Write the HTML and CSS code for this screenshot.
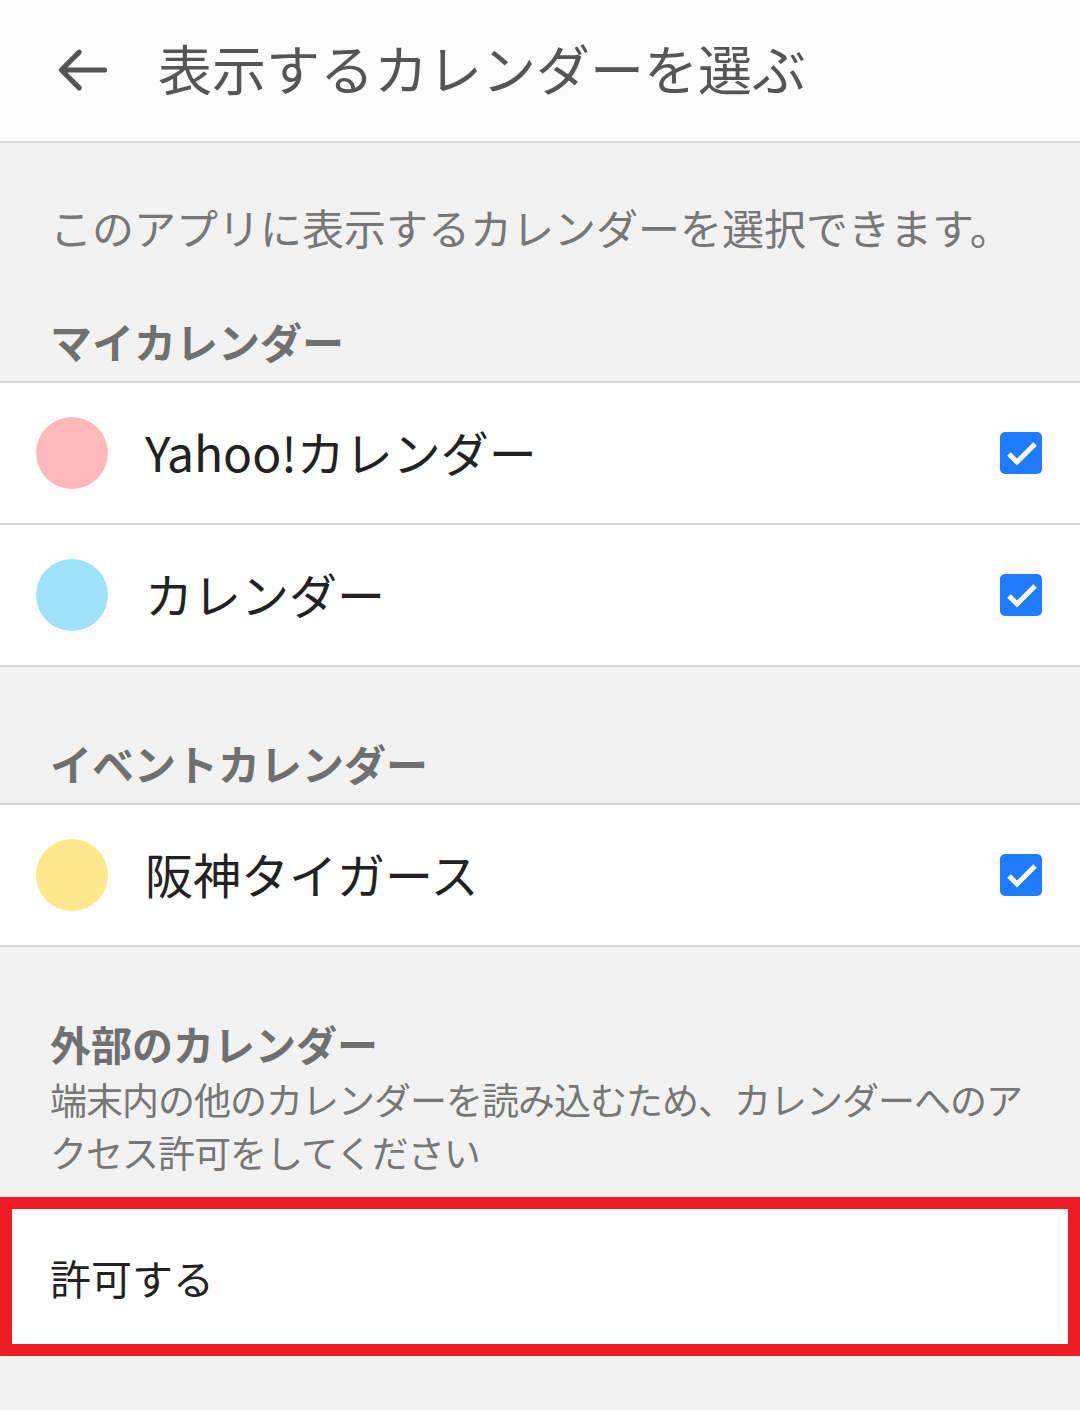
FILE: index.html
```html
<!DOCTYPE html>
<html lang="ja">
<head>
    <meta charset="UTF-8">
    <meta name="viewport" content="width=device-width, initial-scale=1.0">
    <title>表示するカレンダーを選ぶ</title>
    <link rel="stylesheet" href="styles.css">
</head>
<body>

<div class="header">
    <svg class="back" width="60" height="60" viewBox="50 42 64 60">
        <path d="M106 72 H61 M79 53 L60 72 L79 91" fill="none" stroke="#555" stroke-width="5.5" stroke-linecap="round" stroke-linejoin="round"/>
    </svg>
    <h1>表示するカレンダーを選ぶ</h1>
</div>

<div class="section intro">
    <p class="desc">このアプリに表示するカレンダーを選択できます。</p>
    <h2>マイカレンダー</h2>
</div>

<div class="row">
    <span class="dot pink"></span>
    <span class="name">Yahoo!カレンダー</span>
    <span class="check">
        <svg width="42" height="42" viewBox="0 0 42 42"><polyline points="9,22 17,30 35,12" fill="none" stroke="#fff" stroke-width="5"/></svg>
    </span>
</div>
<div class="row">
    <span class="dot blue"></span>
    <span class="name">カレンダー</span>
    <span class="check">
        <svg width="42" height="42" viewBox="0 0 42 42"><polyline points="9,22 17,30 35,12" fill="none" stroke="#fff" stroke-width="5"/></svg>
    </span>
</div>

<div class="section event">
    <h2>イベントカレンダー</h2>
</div>

<div class="row">
    <span class="dot yellow"></span>
    <span class="name">阪神タイガース</span>
    <span class="check">
        <svg width="42" height="42" viewBox="0 0 42 42"><polyline points="9,22 17,30 35,12" fill="none" stroke="#fff" stroke-width="5"/></svg>
    </span>
</div>

<div class="section external">
    <h2>外部のカレンダー</h2>
    <p class="note">端末内の他のカレンダーを読み込むため、カレンダーへのアクセス許可をしてください</p>
</div>

<div class="allow">許可する</div>

</body>
</html>
```

FILE: styles.css
```css
body {
    font-family: "Noto Sans CJK JP", "Noto Sans", sans-serif;
    background-color: #f2f2f2;
    margin: 0;
    height: 1410px;
    overflow: hidden;
}
.header {
    height: 141px;
    background-color: #fcfcfc;
    border-bottom: 2px solid #d8d8d8;
    display: flex;
    align-items: center;
    padding-left: 52px;
}
.header .back {
    margin-top: -2px;
}
.header h1 {
    margin: 0 0 0 46px;
    font-size: 54px;
    font-weight: 400;
    color: #555;
    line-height: 1;
    margin-top: -6px;
}
.section {
    padding: 0 50px 10px 50px;
}
.section h2 {
    margin: 0;
    font-size: 42px;
    font-weight: 700;
    color: #707070;
    line-height: 60px;
}
.intro {
    padding-top: 54px;
    border-bottom: 2px solid #d8d8d8;
}
.intro .desc {
    margin: 0 0 54px 0;
    font-size: 42px;
    color: #777;
    line-height: 60px;
}
.event {
    padding-top: 66px;
    border-bottom: 2px solid #d8d8d8;
}
.row {
    height: 140px;
    background-color: #fff;
    border-bottom: 2px solid #d8d8d8;
    display: flex;
    align-items: center;
    padding: 0 38px 0 36px;
}
.dot {
    width: 72px;
    height: 72px;
    border-radius: 50%;
    flex-shrink: 0;
}
.pink { background-color: #ffb9b9; }
.blue { background-color: #a0e1fd; }
.yellow { background-color: #ffe98a; }
.name {
    margin-left: 37px;
    font-size: 48px;
    color: #222;
    flex: 1;
    margin-top: -4px;
}
.check {
    width: 42px;
    height: 42px;
    border-radius: 5px;
    background-color: #1f7bff;
    display: flex;
}
.external {
    padding-top: 70px;
    padding-bottom: 18px;
    padding-right: 40px;
}
.external h2 {
    font-size: 41px;
    line-height: 52px;
    margin-bottom: 4px;
}
.external .note {
    margin: 0;
    font-size: 37px;
    letter-spacing: -1px;
    color: #777;
    line-height: 53px;
}
.allow {
    height: 135px;
    background-color: #fff;
    border: 12px solid #ee1d25;
    display: flex;
    align-items: center;
    padding-left: 38px;
    font-size: 41px;
    color: #222;
}
```
